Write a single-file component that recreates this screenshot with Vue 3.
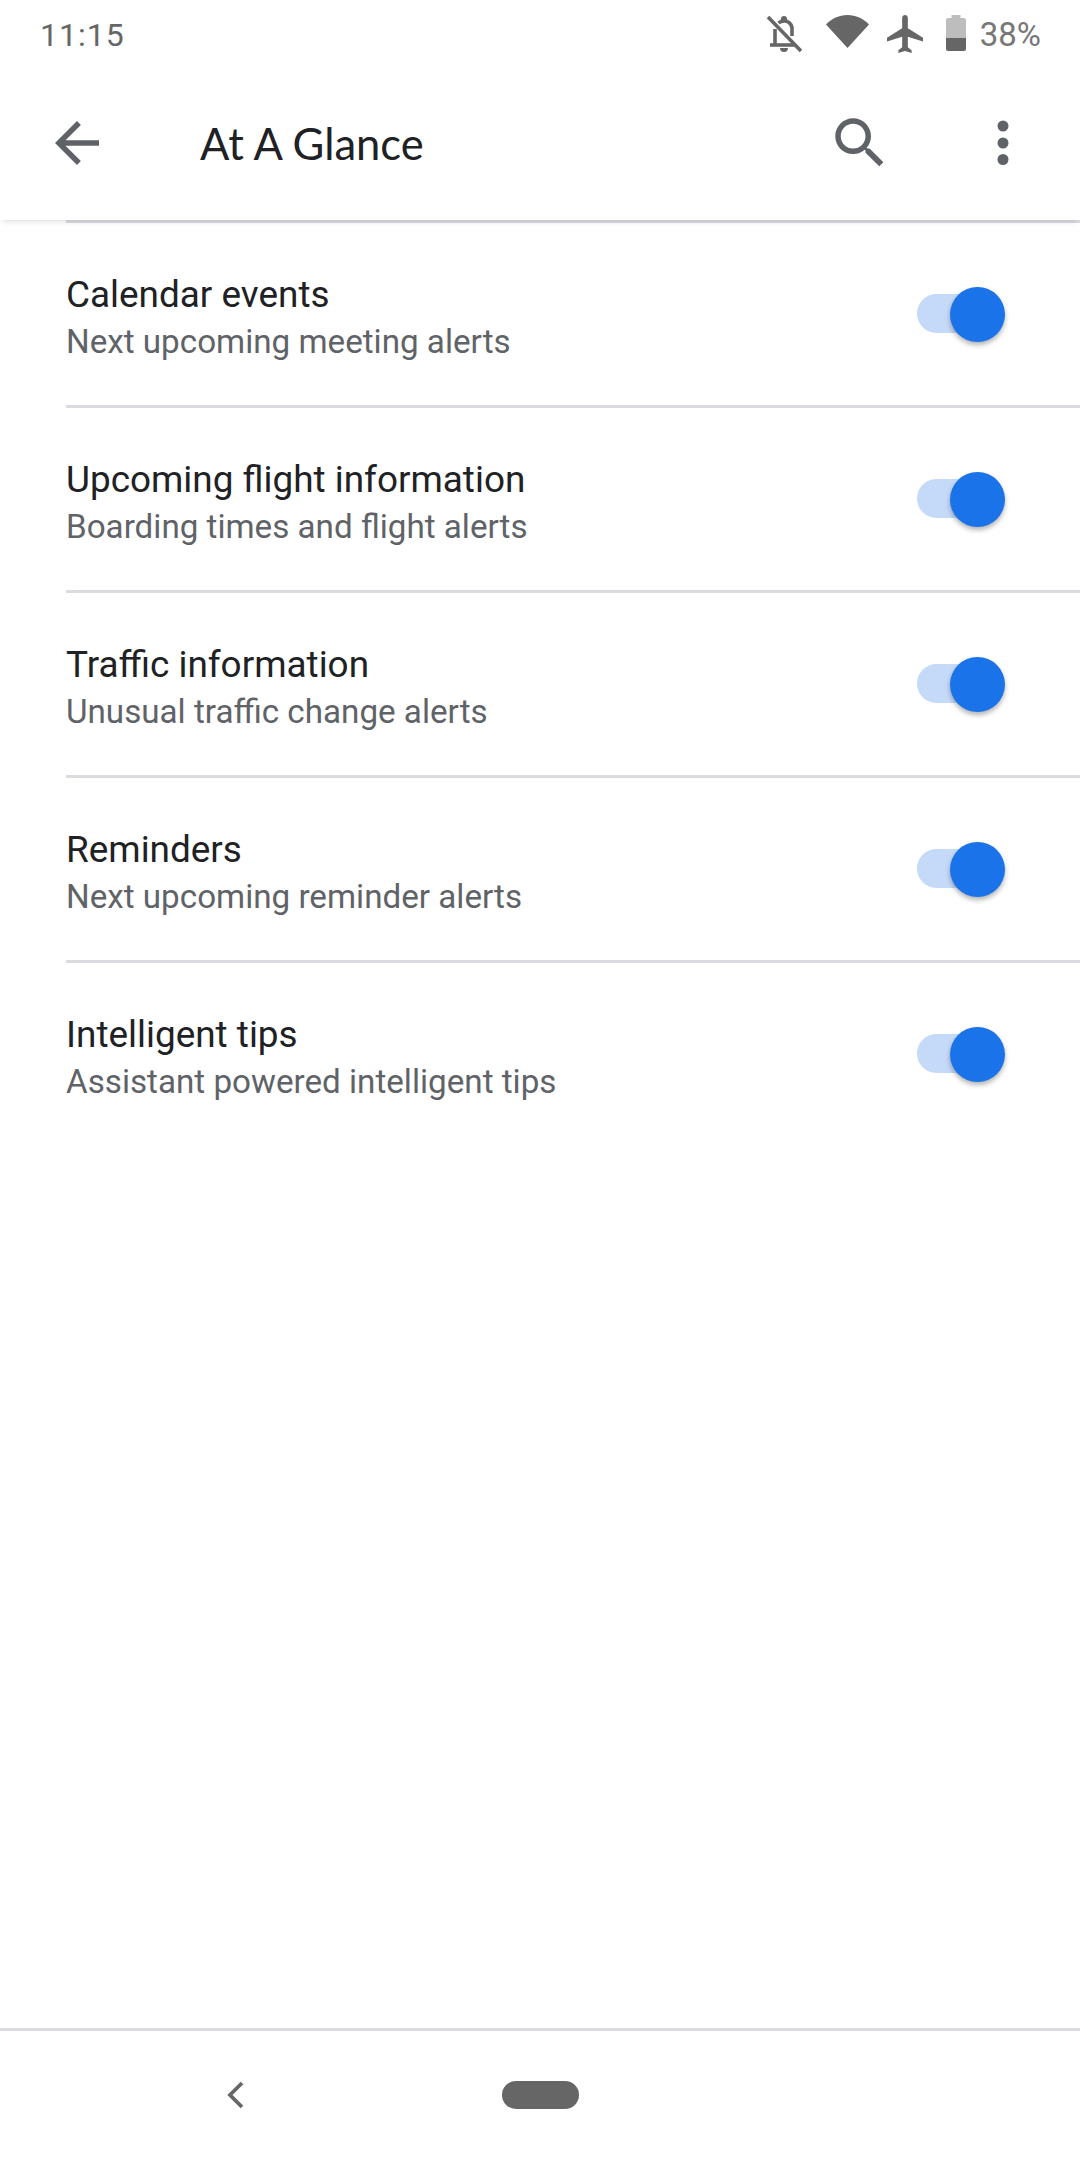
<template>
  <div class="page">
    <div class="status">
      <span class="time">11:15</span>
      <div class="status-icons">
        <svg class="bell" width="36" height="38" viewBox="0 0 36 38">
          <path d="M9 14v15M26 12.500c-1-4-4-6.500-8-6.500-2 0-4 .7-5.500 2M26 12v9" fill="none" stroke="#666" stroke-width="3.600" />
          <path d="M4 30h25" fill="none" stroke="#666" stroke-width="3.600" />
          <path d="M15 4a3 3 0 0 1 6 0v2h-6zM14 33h8a4 4 0 0 1-8 0z" fill="#666" />
          <path d="M2 2l33 34" fill="none" stroke="#666" stroke-width="3.600" />
        </svg>
        <svg class="wifi" width="43" height="33" viewBox="0 0 43 33">
          <path d="M0 9.500C6 3.500 13 0 21.500 0S37 3.500 43 9.500L21.500 33z" fill="#666" />
        </svg>
        <svg class="plane" width="36" height="38" viewBox="2 2 19 20" preserveAspectRatio="none">
          <path d="M21 16v-2l-8-5V3.500c0-.83-.67-1.500-1.500-1.500S10 2.670 10 3.500V9l-8 5v2l8-2.500V19l-2 1.500V22l3.500-1 3.500 1v-1.500L13 19v-5.500l8 2.500z" fill="#666" />
        </svg>
        <svg class="battery" width="20" height="36" viewBox="0 0 20 36">
          <path d="M5.500 0h9v3H18a2 2 0 0 1 2 2v12H0V5a2 2 0 0 1 2-2h3.500z" fill="#bdbdbd" />
          <path d="M0 23h20v11a2 2 0 0 1-2 2H2a2 2 0 0 1-2-2z" fill="#666" />
          <path d="M0 17h20v6H0z" fill="#bdbdbd" />
        </svg>
        <span class="percent">38%</span>
      </div>
    </div>

    <header class="toolbar">
      <svg class="back" width="66" height="66" viewBox="0 0 24 24">
        <path d="M20 11H7.830l5.590-5.590L12 4l-8 8 8 8 1.410-1.410L7.830 13H20v-2z" fill="#5f6368" />
      </svg>
      <h1 class="title">At A Glance</h1>
      <svg width="66" height="66" viewBox="0 0 24 24">
        <path d="M15.500 14h-.79l-.28-.27C15.410 12.590 16 11.110 16 9.500 16 5.910 13.090 3 9.500 3S3 5.910 3 9.500 5.910 16 9.500 16c1.610 0 3.090-.59 4.230-1.570l.27.28v.79l5 4.990L20.490 19l-4.990-5zm-6 0C7.010 14 5 11.990 5 9.500S7.010 5 9.500 5 14 7.010 14 9.500 11.990 14 9.500 14z" fill="#5f6368" />
      </svg>
      <svg class="more" width="66" height="66" viewBox="0 0 66 66">
        <circle cx="33" cy="16" r="5.500" fill="#5f6368" />
        <circle cx="33" cy="33" r="5.500" fill="#5f6368" />
        <circle cx="33" cy="49.500" r="5.500" fill="#5f6368" />
      </svg>
    </header>

    <main class="list">
      <div class="row" v-for="item in items" :key="item.title">
        <div class="texts">
          <div class="row-title">{{ item.title }}</div>
          <div class="row-sub">{{ item.sub }}</div>
        </div>
        <div class="toggle">
          <div class="track"></div>
          <div class="thumb"></div>
        </div>
      </div>
    </main>

    <footer class="nav">
      <svg class="chevron" width="17" height="28" viewBox="0 0 17 28">
        <path d="M15 2L3 14l12 12" fill="none" stroke="#666" stroke-width="3.800" />
      </svg>
      <div class="pill"></div>
    </footer>
  </div>
</template>

<script setup>
const items = [
  { title: 'Calendar events', sub: 'Next upcoming meeting alerts' },
  { title: 'Upcoming flight information', sub: 'Boarding times and flight alerts' },
  { title: 'Traffic information', sub: 'Unusual traffic change alerts' },
  { title: 'Reminders', sub: 'Next upcoming reminder alerts' },
  { title: 'Intelligent tips', sub: 'Assistant powered intelligent tips' }
]
</script>

<style scoped>
.page {
  display: flex;
  flex-direction: column;
  height: 2160px;
  background: #fff;
  font-family: Roboto, "Liberation Sans", sans-serif;
}
.status {
  display: flex;
  justify-content: space-between;
  height: 66px;
  padding: 15px 39px 0 40px;
  box-sizing: border-box;
}
.time {
  margin-top: 2px;
  font-size: 32px;
  line-height: 36px;
  letter-spacing: 1px;
  color: #666;
}
.status-icons {
  display: flex;
  align-items: flex-start;
}
.wifi {
  margin-left: 24px;
}
.plane {
  margin-left: 18px;
}
.battery {
  margin-left: 23px;
}
.percent {
  margin-left: 14px;
  margin-top: 2px;
  font-size: 33px;
  line-height: 36px;
  color: #777;
}
.toolbar {
  display: flex;
  align-items: center;
  height: 154px;
  padding: 0 44px;
  box-sizing: border-box;
  background: #fff;
  box-shadow: 0 5px 5px -3px rgba(0, 0, 0, 0.12);
  position: relative;
}
.title {
  flex: 1;
  margin: 0 0 0 90px;
  font-family: Lato, Roboto, sans-serif;
  font-size: 43.500px;
  font-weight: 400;
  color: #202124;
}
.more {
  margin-left: 77px;
}
.list {
  flex: 1;
}
.row {
  display: flex;
  align-items: center;
  justify-content: space-between;
  height: 185px;
  margin-left: 66px;
  padding-right: 75px;
  box-sizing: border-box;
  border-top: 3px solid #dadce0;
}
.texts {
  padding-top: 6px;
}
.row-title {
  font-size: 36.900px;
  line-height: 50px;
  color: #202124;
}
.row-sub {
  font-size: 33.200px;
  line-height: 44px;
  color: #5f6368;
}
.toggle {
  position: relative;
  width: 88px;
  height: 55px;
}
.track {
  position: absolute;
  left: 0;
  top: 7px;
  width: 76px;
  height: 39px;
  border-radius: 20px;
  background: #c5daf9;
}
.thumb {
  position: absolute;
  right: 0;
  top: 0;
  width: 55px;
  height: 55px;
  border-radius: 50%;
  background: #1a73e8;
  box-shadow: 0 3px 5px rgba(0, 0, 0, 0.3);
}
.nav {
  display: flex;
  align-items: center;
  height: 132px;
  padding-left: 227px;
  padding-bottom: 2px;
  box-sizing: border-box;
  border-top: 3px solid #dadce0;
}
.pill {
  width: 77px;
  height: 28px;
  margin-left: 258px;
  border-radius: 14px;
  background: #666;
}
</style>

<style>
html, body {
  margin: 0;
  background: #fff;
}
</style>
